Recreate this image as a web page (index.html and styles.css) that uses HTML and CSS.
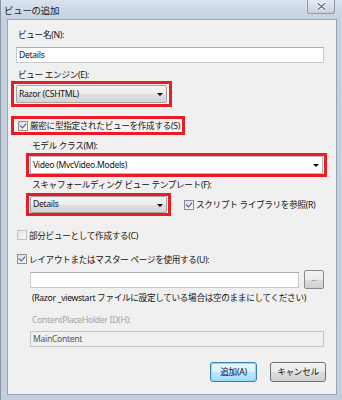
FILE: index.html
```html
<!DOCTYPE html>
<html lang="ja">
<head>
    <meta charset="UTF-8">
    <title>ビューの追加</title>
    <link rel="stylesheet" href="styles.css">
</head>
<body>
    <div class="window">
        <!-- Title bar -->
        <div class="titlebar">
            <span class="title">ビューの追加</span>
            <span class="close-btn">
                <svg width="11" height="9" viewBox="0 0 11 9">
                    <path d="M2 1.5 L9 7.5 M9 1.5 L2 7.5" stroke="#fff" stroke-width="3.2" stroke-linecap="round"/>
                    <path d="M2 1.5 L9 7.5 M9 1.5 L2 7.5" stroke="#6d7684" stroke-width="1.6" stroke-linecap="round"/>
                </svg>
            </span>
        </div>

        <div class="client">
            <div class="label name-label">ビュー名(N):</div>
            <div class="textbox name-box">Details</div>

            <div class="label engine-label">ビュー エンジン(E):</div>
            <div class="mark engine-mark">
                <div class="combo engine-combo">Razor (CSHTML)<span class="arrow"></span></div>
            </div>

            <div class="mark strong-mark">
                <span class="checkbox checked"></span>
                <span>厳密に型指定されたビューを作成する(S)</span>
            </div>

            <div class="indent">
                <div class="label sub-label model-label">モデル クラス(M):</div>
                <div class="mark model-mark">
                    <div class="combo editable model-combo">Video (MvcVideo.Models)<span class="arrow"></span></div>
                </div>

                <div class="label sub-label template-label">スキャフォールディング ビュー テンプレート(F):</div>
                <div class="template-row">
                    <div class="mark template-mark">
                        <div class="combo template-combo">Details<span class="arrow"></span></div>
                    </div>
                    <label class="check-row script-check">
                        <span class="checkbox checked"></span>
                        <span>スクリプト ライブラリを参照(R)</span>
                    </label>
                </div>
            </div>

            <label class="check-row partial-check">
                <span class="checkbox"></span>
                <span>部分ビューとして作成する(C)</span>
            </label>

            <label class="check-row layout-check">
                <span class="checkbox checked"></span>
                <span>レイアウトまたはマスター ページを使用する(U):</span>
            </label>

            <div class="layout-row">
                <div class="textbox layout-box"></div>
                <div class="browse-btn">...</div>
            </div>
            <div class="label note">(Razor _viewstart ファイルに設定している場合は空のままにしてください)</div>

            <div class="label disabled cph-label">ContentPlaceHolder ID(H):</div>
            <div class="textbox disabled-box cph-box">MainContent</div>

            <div class="buttons">
                <div class="btn btn-default">追加(A)</div>
                <div class="btn">キャンセル</div>
            </div>
        </div>
    </div>
</body>
</html>
```

FILE: styles.css
```css
/* General */
* {
    margin: 0;
    padding: 0;
    box-sizing: border-box;
}

body {
    width: 342px;
    height: 400px;
    overflow: hidden;
    font-family: "Noto Sans", "Noto Sans CJK JP", sans-serif;
    font-size: 8.6px;
    letter-spacing: -0.3px;
    color: #111;
    background: #c9d4e2;
}

/* Window frame */
.window {
    width: 342px;
    height: 400px;
    padding: 0 6px 5px 6px;
    border-left: 1px solid #8b96a5;
    background: linear-gradient(180deg, #d9e2ee 0px, #c5d1e0 19px, #c4cfdd 100%);
}

.titlebar {
    height: 19px;
    display: flex;
    justify-content: space-between;
    align-items: flex-start;
    margin-left: -3px;
}

.title {
    margin-top: 3px;
    font-size: 9.5px;
    color: #1c1c1c;
}

.close-btn {
    width: 28px;
    height: 14px;
    margin-right: 1px;
    display: flex;
    justify-content: center;
    align-items: center;
    border: 1px solid #8f99a8;
    border-top: none;
    border-radius: 0 0 3px 3px;
    background: linear-gradient(180deg, #e4eaf2, #c7d1de);
}

.client {
    height: 376px;
    width: 330px;
    background: #f0f0f0;
    border: 1px solid #9aa5b4;
    padding: 0 0 0 3px;
    display: flex;
    flex-direction: column;
    align-items: flex-start;
}

/* Labels */
.label {
    height: 12px;
    line-height: 12px;
    white-space: nowrap;
}

.name-label {
    margin: 9px 0 0 7px;
}

.engine-label {
    margin: 6px 0 0 7px;
}

.sub-label {
    margin-left: 6px;
}

.model-label {
    margin-top: 5px;
}

.template-label {
    margin-top: 2px;
}

.disabled {
    color: #a3a3a3;
}

/* Text boxes */
.textbox {
    height: 16px;
    line-height: 14px;
    padding-left: 2px;
    background: #fff;
    border: 1px solid #c5c9d0;
    border-top-color: #abadb3;
}

.name-box {
    width: 308px;
    margin: 6px 0 0 5px;
}

.disabled-box {
    background: #f0f0f0;
    border-color: #c4c4c4;
    color: #555;
}

.cph-box {
    width: 294px;
    margin: 5px 0 0 19px;
}

/* Red annotation boxes */
.mark {
    border: 3px solid #ec1c24;
    background: #f4f4f4;
}

.engine-mark {
    width: 161px;
    padding: 1px 2px;
}

.strong-mark {
    width: 174px;
    height: 19px;
    margin-top: 9px;
    display: flex;
    align-items: center;
    padding-left: 4px;
    gap: 2px;
    white-space: nowrap;
}

.model-mark {
    width: 301px;
    margin-top: 1px;
    padding: 0 1px;
}

.template-mark {
    width: 145px;
    padding: 0 1px;
}

/* Combo boxes */
.combo {
    position: relative;
    height: 18px;
    line-height: 16px;
    padding-left: 2px;
    border: 1px solid #a4a4a4;
    border-radius: 2px;
    background: linear-gradient(180deg, #f4f4f4 0%, #ececec 50%, #dfdfdf 51%, #d6d6d6 100%);
}

.combo.editable {
    background: #fff;
    border-color: #b3b6bc;
    border-radius: 0;
}

.template-combo {
    height: 17px;
    line-height: 15px;
}

.arrow {
    position: absolute;
    right: 3px;
    top: 50%;
    margin-top: -1px;
    border-left: 3px solid transparent;
    border-right: 3px solid transparent;
    border-top: 3px solid #000;
}

/* Indented section */
.indent {
    margin-left: 15px;
    display: flex;
    flex-direction: column;
    align-items: flex-start;
}

.template-row {
    margin-top: 2px;
    display: flex;
    align-items: center;
}

/* Checkboxes */
.check-row {
    display: flex;
    align-items: center;
    gap: 2px;
    height: 12px;
    white-space: nowrap;
}

.script-check {
    margin-left: 13px;
}

.partial-check {
    margin: 13px 0 0 6px;
}

.partial-check .checkbox {
    border-color: #c2c2c2;
    background: linear-gradient(135deg, #e6e6e6, #f7f7f7);
}

.layout-check {
    margin: 12px 0 0 6px;
}

.checkbox {
    width: 10px;
    height: 10px;
    flex-shrink: 0;
    border: 1px solid #8e8f8f;
    background: linear-gradient(135deg, #dcdcdc, #fbfbfb);
    position: relative;
}

.checkbox.checked::after {
    content: "";
    position: absolute;
    left: 2px;
    top: 0px;
    width: 3px;
    height: 5px;
    border-right: 1.5px solid #3d5288;
    border-bottom: 1.5px solid #3d5288;
    transform: rotate(40deg);
}

/* Layout page row */
.layout-row {
    margin: 5px 0 0 19px;
    display: flex;
    align-items: center;
    gap: 5px;
}

.layout-box {
    width: 269px;
}

.browse-btn {
    width: 20px;
    height: 19px;
    line-height: 14px;
    text-align: center;
    font-size: 8px;
    color: #6e6e6e;
    border: 1px solid #8a8a8a;
    border-radius: 2px;
    background: linear-gradient(180deg, #f2f2f2 0%, #ebebeb 50%, #dddddd 51%, #cfcfcf 100%);
}

.note {
    margin: 3px 0 0 21px;
}

.cph-label {
    margin: 10px 0 0 21px;
}

/* Dialog buttons */
.buttons {
    margin-top: 15px;
    align-self: flex-end;
    margin-right: 10px;
    display: flex;
    gap: 13px;
}

.btn {
    width: 56px;
    height: 20px;
    line-height: 18px;
    text-align: center;
    border: 1px solid #707070;
    border-radius: 3px;
    background: linear-gradient(180deg, #f2f2f2 0%, #ebebeb 50%, #dddddd 51%, #cfcfcf 100%);
}

.btn-default {
    width: 47px;
    border-color: #3c7fb1;
    background: linear-gradient(180deg, #eaf6fd 0%, #d9f0fc 50%, #bee6fd 51%, #a7d9f5 100%);
    box-shadow: inset 0 0 0 1px #8fd8f6;
}
```
